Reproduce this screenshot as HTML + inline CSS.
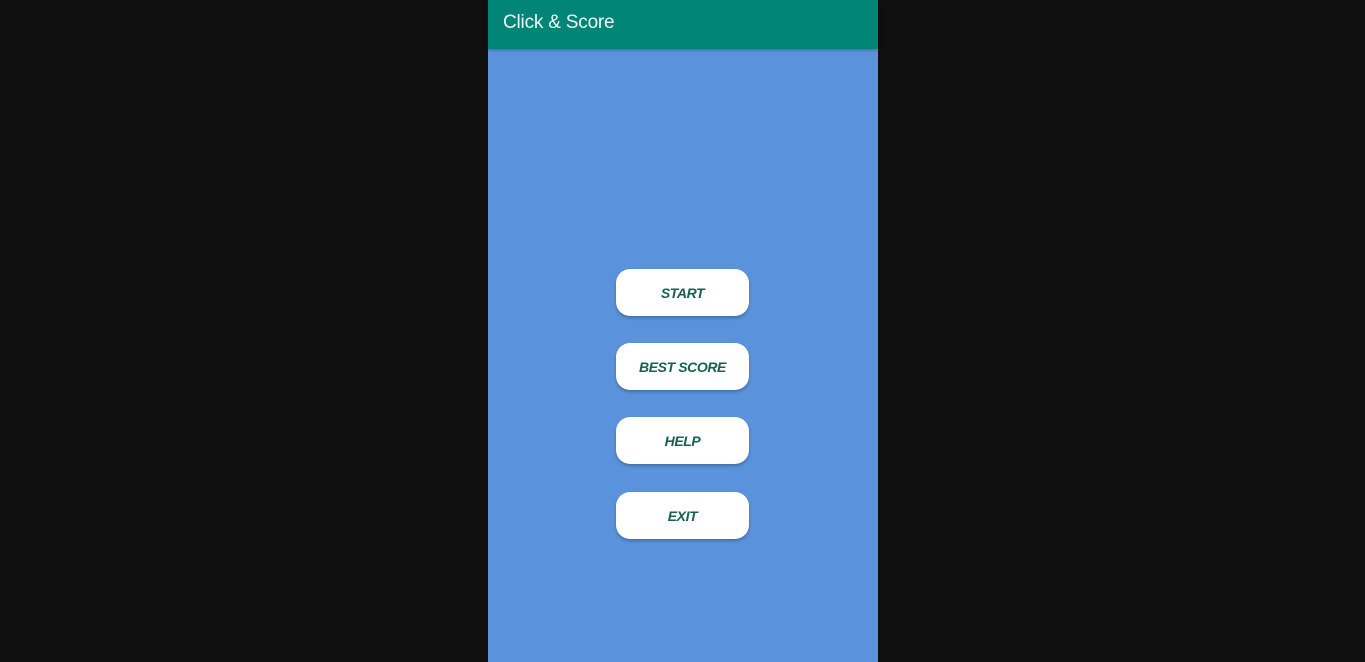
<!DOCTYPE html>
<html><head><style>
html,body{margin:0;padding:0;background:#0f0f0f;width:1365px;height:662px;overflow:hidden;font-family:"Liberation Sans",sans-serif}
.app{position:absolute;left:488px;top:0;width:390px;height:662px;background:#5a93dc}
.bar{position:absolute;left:0;top:0;width:390px;height:49px;background:#008577;box-shadow:0 1px 3px rgba(0,0,0,.3)}
.bar span{position:absolute;left:15px;top:12px;color:#eef7f5;font-size:19px;letter-spacing:-0.2px}
.btn{position:absolute;left:128px;width:133px;height:47px;background:#fff;border-radius:14px;box-shadow:0 2px 3px rgba(0,0,0,.25);text-align:center;line-height:49px;color:#17614f;font-weight:bold;font-style:italic;font-size:14px;letter-spacing:-0.4px}
</style></head><body>
<div class="app">
<div class="bar"><span>Click &amp; Score</span></div>
<div class="btn" style="top:269px">START</div>
<div class="btn" style="top:343px">BEST SCORE</div>
<div class="btn" style="top:417px">HELP</div>
<div class="btn" style="top:492px">EXIT</div>
</div>
</body></html>
